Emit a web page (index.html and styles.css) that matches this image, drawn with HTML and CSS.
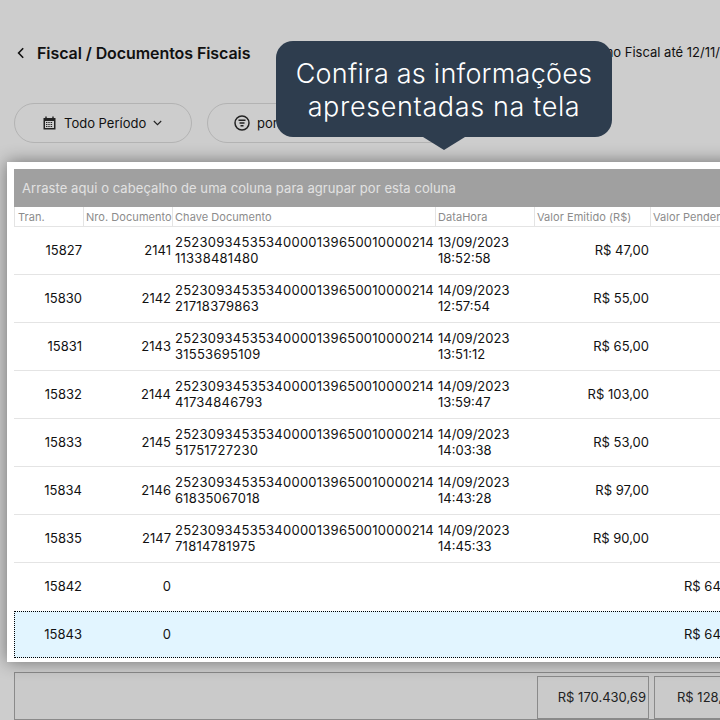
FILE: index.html
```html
<!DOCTYPE html>
<html lang="pt-BR">
<head>
<meta charset="utf-8">
<title>Documentos Fiscais</title>
<link rel="stylesheet" href="styles.css">
</head>
<body>
<div class="page">
  <header class="topbar">
    <svg class="back" width="8" height="12" viewBox="0 0 8 12"><path d="M6.2 1.2 1.6 6l4.6 4.8" fill="none" stroke="#111" stroke-width="1.6"/></svg>
    <h1 class="title">Fiscal / Documentos Fiscais</h1>
    <span class="sync">Último Fiscal até 12/11/2023</span>
  </header>
  <div class="filters">
    <button class="pill pill-period">
      <svg width="13" height="14" viewBox="0 0 13 14"><path d="M0.5 2h12v11.5H.5z" fill="#222"/><path d="M3 .5v2M10 .5v2" stroke="#222" stroke-width="1.4"/><path d="M2 5h9v7H2z" fill="#cdcdcd"/><path d="M3 6.5h7M3 8.5h7M3 10.5h7" stroke="#222" stroke-width="1" stroke-dasharray="1.4 .9"/></svg>
      <span>Todo Período</span>
      <svg width="9" height="6" viewBox="0 0 9 6"><path d="M.8 1l3.7 3.7L8.200 1" fill="none" stroke="#222" stroke-width="1.1"/></svg>
    </button>
    <button class="pill pill-order">
      <svg width="16" height="16" viewBox="0 0 16 16"><circle cx="8" cy="8" r="7" fill="none" stroke="#222" stroke-width="1.5"/><path d="M4.500 5.200h7M5.500 8h5M6.500 10.800h3" stroke="#222" stroke-width="1.500"/></svg>
      <span>por Data</span>
    </button>
  </div>
  <section class="panel">
    <div class="group">Arraste aqui o cabeçalho de uma coluna para agrupar por esta coluna</div>
    <div class="row head">
      <div class="hc hc-first">Tran.</div><div class="hc">Nro. Documento</div><div class="hc">Chave Documento</div><div class="hc">DataHora</div><div class="hc">Valor Emitido (R$)</div><div class="hc">Valor Pendente (R$)</div>
    </div>
    <div class="row data"><div class="r">15827</div><div class="r">2141</div><div class="wrap key">25230934535340000139650010000214<br>11338481480</div><div class="wrap">13/09/2023<br>18:52:58</div><div class="r">R$ 47,00</div><div></div></div>
    <div class="row data"><div class="r">15830</div><div class="r">2142</div><div class="wrap key">25230934535340000139650010000214<br>21718379863</div><div class="wrap">14/09/2023<br>12:57:54</div><div class="r">R$ 55,00</div><div></div></div>
    <div class="row data"><div class="r">15831</div><div class="r">2143</div><div class="wrap key">25230934535340000139650010000214<br>31553695109</div><div class="wrap">14/09/2023<br>13:51:12</div><div class="r">R$ 65,00</div><div></div></div>
    <div class="row data"><div class="r">15832</div><div class="r">2144</div><div class="wrap key">25230934535340000139650010000214<br>41734846793</div><div class="wrap">14/09/2023<br>13:59:47</div><div class="r">R$ 103,00</div><div></div></div>
    <div class="row data"><div class="r">15833</div><div class="r">2145</div><div class="wrap key">25230934535340000139650010000214<br>51751727230</div><div class="wrap">14/09/2023<br>14:03:38</div><div class="r">R$ 53,00</div><div></div></div>
    <div class="row data"><div class="r">15834</div><div class="r">2146</div><div class="wrap key">25230934535340000139650010000214<br>61835067018</div><div class="wrap">14/09/2023<br>14:43:28</div><div class="r">R$ 97,00</div><div></div></div>
    <div class="row data"><div class="r">15835</div><div class="r">2147</div><div class="wrap key">25230934535340000139650010000214<br>71814781975</div><div class="wrap">14/09/2023<br>14:45:33</div><div class="r">R$ 90,00</div><div></div></div>
    <div class="row data plain"><div class="r">15842</div><div class="r">0</div><div></div><div></div><div></div><div class="l">R$ 64,00</div></div>
    <div class="row data selected"><div class="r">15843</div><div class="r">0</div><div></div><div></div><div></div><div class="l">R$ 64,00</div></div>
  </section>
  <footer class="totals">
    <div class="total t1">R$ 170.430,69</div>
    <div class="total t2">R$ 128,00</div>
  </footer>
  <div class="tip">Confira as informações<br><span class="tip-second">apresentadas na tela</span></div>
</div>
</body>
</html>
```
FILE: styles.css
```css
* { box-sizing: border-box; }
html, body { margin: 0; height: 100%; }
body { background: #cdcdcd; font-family: Inter, "Liberation Sans", sans-serif; color: #111; overflow: hidden; }
.page { position: relative; width: 720px; height: 720px; overflow: hidden; }

.topbar { display: flex; align-items: center; height: 20px; margin-top: 43px; padding-left: 17px; position: relative; white-space: nowrap; }
.back { margin-right: 12px; }
.title { margin: 0; font-size: 16px; font-weight: 600; line-height: 20px; letter-spacing: -.08px; color: #111; }
.sync { margin-left: auto; margin-right: -32px; margin-bottom: 2px; font-size: 13px; }

.filters { display: flex; gap: 15px; margin-top: 40px; padding-left: 14px; }
.pill { display: flex; align-items: center; height: 40px; border: 1px solid #b3b3b3; border-radius: 20px; background: transparent; font: 13px Inter, "Liberation Sans", sans-serif; color: #111; padding: 0; white-space: nowrap; }
.pill-period { width: 178px; padding-left: 28px; }
.pill-period span { margin: 0 7px 0 8px; }
.pill-order { width: 260px; padding-left: 26px; }
.pill-order span { margin-left: 7px; }

.panel { width: 730px; height: 500px; margin-top: 19px; margin-left: 7px; padding: 7px; background: #fff; box-shadow: 0 0 16px rgba(0,0,0,.45); position: relative; }
.group { height: 38px; line-height: 38px; padding-left: 8px; background: #a0a0a0; color: #e2e2e2; font-size: 13px; letter-spacing: .07px; white-space: nowrap; }

.row { display: grid; grid-template-columns: 69px 89px 263px 99px 116px 100px; }
.head { height: 20px; border-bottom: 1px solid #e4e4e4; }
.hc { font-size: 11px; line-height: 21px; padding-left: 2px; color: #8c8c8c; border-left: 1px solid #e4e4e4; letter-spacing: .05px; white-space: nowrap; overflow: hidden; }
.hc-first { padding-left: 3px; }
.data { height: 48px; padding-bottom: 2px; border-bottom: 1px solid #e4e4e4; align-items: center; font-size: 13px; line-height: 16px; }
.r { text-align: right; padding-right: 1px; white-space: nowrap; }
.wrap { padding-left: 3px; white-space: nowrap; }
.key { letter-spacing: .25px; }
.l { white-space: nowrap; padding-left: 34px; }
.plain { border-bottom: 0; }
.selected { height: 47px; grid-template-columns: 68px 89px 263px 99px 116px 100px; background: #e2f5ff; border: 1px dotted #000; }

.totals { display: flex; gap: 5px; justify-content: flex-start; width: 720px; height: 48px; margin-top: 10px; margin-left: 14px; padding: 3px 0 1px 522px; border: 1px solid #8a8a8a; border-right: 0; background: #cacaca; }
.total { flex: none; height: 43px; line-height: 41px; border: 1px solid #8a8a8a; text-align: right; padding-right: 2px; font-size: 13px; color: #222; white-space: nowrap; }
.t1 { width: 112px; }
.t2 { width: 110px; text-align: left; padding-left: 22px; }

.tip { position: absolute; left: 276px; top: 41px; width: 336px; height: 96px; border-radius: 17px; background: #2e3d4e; color: #fff; font-size: 27px; font-weight: 300; line-height: 33px; letter-spacing: .23px; text-align: center; padding-top: 16px; }
.tip-second { letter-spacing: .63px; }
.tip::after { content: ""; position: absolute; left: 147px; top: 96px; width: 0; height: 0; border-left: 21px solid transparent; border-right: 21px solid transparent; border-top: 13px solid #2e3d4e; }
```
